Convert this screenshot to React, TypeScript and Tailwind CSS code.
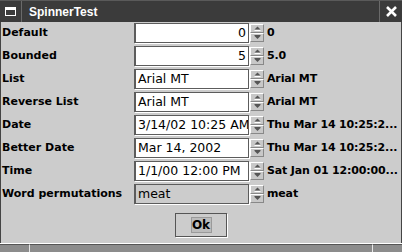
import React from "react";

type Row = {
  label: string;
  text: string;
  value: string;
  align?: "left" | "right";
  editable?: boolean;
};

const rows: Row[] = [
  { label: "Default", text: "0", value: "0", align: "right" },
  { label: "Bounded", text: "5", value: "5.0", align: "right" },
  { label: "List", text: "Arial MT", value: "Arial MT" },
  { label: "Reverse List", text: "Arial MT", value: "Arial MT" },
  { label: "Date", text: "3/14/02 10:25 AM", value: "Thu Mar 14 10:25:2..." },
  { label: "Better Date", text: "Mar 14, 2002", value: "Thu Mar 14 10:25:2..." },
  { label: "Time", text: "1/1/00 12:00 PM", value: "Sat Jan 01 12:00:00..." },
  { label: "Word permutations", text: "meat", value: "meat", editable: false },
];

const Arrow = ({ up }: { up: boolean }) => (
  <svg width="7" height="5" viewBox="0 0 7 5">
    {up ? (
      <>
        <polygon points="3.5,0.5 6.5,3.5 0.5,3.5" fill="#555" />
        <line x1="0.5" y1="4.5" x2="6.5" y2="4.5" stroke="#fff" strokeWidth="1" />
      </>
    ) : (
      <>
        <line x1="0.5" y1="0.5" x2="6.5" y2="0.5" stroke="#555" strokeWidth="1" />
        <polygon points="0.5,1 6.5,1 3.5,4" fill="#555" />
      </>
    )}
  </svg>
);

const SpinButton = ({ up }: { up: boolean }) => (
  <div className="h-[9px] w-[14px] bg-[#c8c8c8] border border-t-white border-l-white border-b-[#888] border-r-[#888] flex items-center justify-center">
    <Arrow up={up} />
  </div>
);

const Spinner = ({ row }: { row: Row }) => {
  const editable = row.editable !== false;
  return (
    <div className="flex items-center h-[20px]">
      <div className="w-[133px] pl-[1px] text-[11px] font-bold text-black whitespace-nowrap">
        {row.label}
      </div>
      <div
        className={`w-[115px] h-[20px] border border-l-2 border-[#5c5c5c] shadow-[1px_1px_0_#ffffff] overflow-hidden flex items-center px-[2px] text-[12.5px] text-black whitespace-nowrap ${
          editable ? "bg-white" : "bg-[#cccccc]"
        } ${row.align === "right" ? "justify-end" : "justify-start"}`}
      >
        {row.text}
      </div>
      <div className="ml-[1px] flex flex-col">
        <SpinButton up />
        <SpinButton up={false} />
      </div>
      <div className="ml-[3px] text-[11px] font-bold text-black whitespace-nowrap tracking-[-0.15px]">
        {row.value}
      </div>
    </div>
  );
};

export default function App() {
  return (
    <div className="w-[402px] h-[252px] bg-[#cccccc] flex flex-col overflow-hidden font-['DejaVu_Sans',sans-serif]">
      {/* title bar */}
      <div className="h-[22px] flex bg-[#3b3b3b] border-t border-[#5a5a5a]">
        <div className="w-[22px] border-r border-[#6a6a6a] flex items-center justify-center">
          <div className="w-[11px] h-[9px] border border-white border-t-[3px]" />
        </div>
        <div className="flex-1 pl-[7px] flex items-center text-white text-[12px] font-bold font-['Liberation_Sans',sans-serif]">
          SpinnerTest
        </div>
        <div className="w-[23px] border-l border-[#6a6a6a] flex items-center justify-center">
          <svg width="11" height="11" viewBox="0 0 11 11">
            <path d="M1 1 L10 10 M10 1 L1 10" stroke="#fff" strokeWidth="2.6" />
          </svg>
        </div>
      </div>

      {/* body */}
      <div className="flex-1 flex flex-col border-l border-r border-[#444] pt-[1px]">
        <div className="flex flex-col gap-[3px]">
          {rows.map((r) => (
            <Spinner key={r.label} row={r} />
          ))}
        </div>
        <div className="flex justify-center mt-[9px]">
          <div className="w-[52px] h-[24px] border border-[#555] shadow-[1px_1px_0_#ffffff] bg-[#cccccc] flex items-center justify-center">
            <div className="w-[21px] h-[16px] bg-[#bcbcbc] border border-[#9a9a9a] flex items-center justify-center text-[12px] font-bold text-black">
              Ok
            </div>
          </div>
        </div>
      </div>

      {/* bottom frame */}
      <div className="h-[9px] flex border-t border-white bg-[#8c8c8c]">
        <div className="w-[30px] border-t border-r border-t-[#555] border-r-[#e6e6e6]" />
        <div className="flex-1 border-t border-[#555]" />
        <div className="w-[30px] border-t border-l border-t-[#555] border-l-[#e6e6e6]" />
      </div>
    </div>
  );
}
